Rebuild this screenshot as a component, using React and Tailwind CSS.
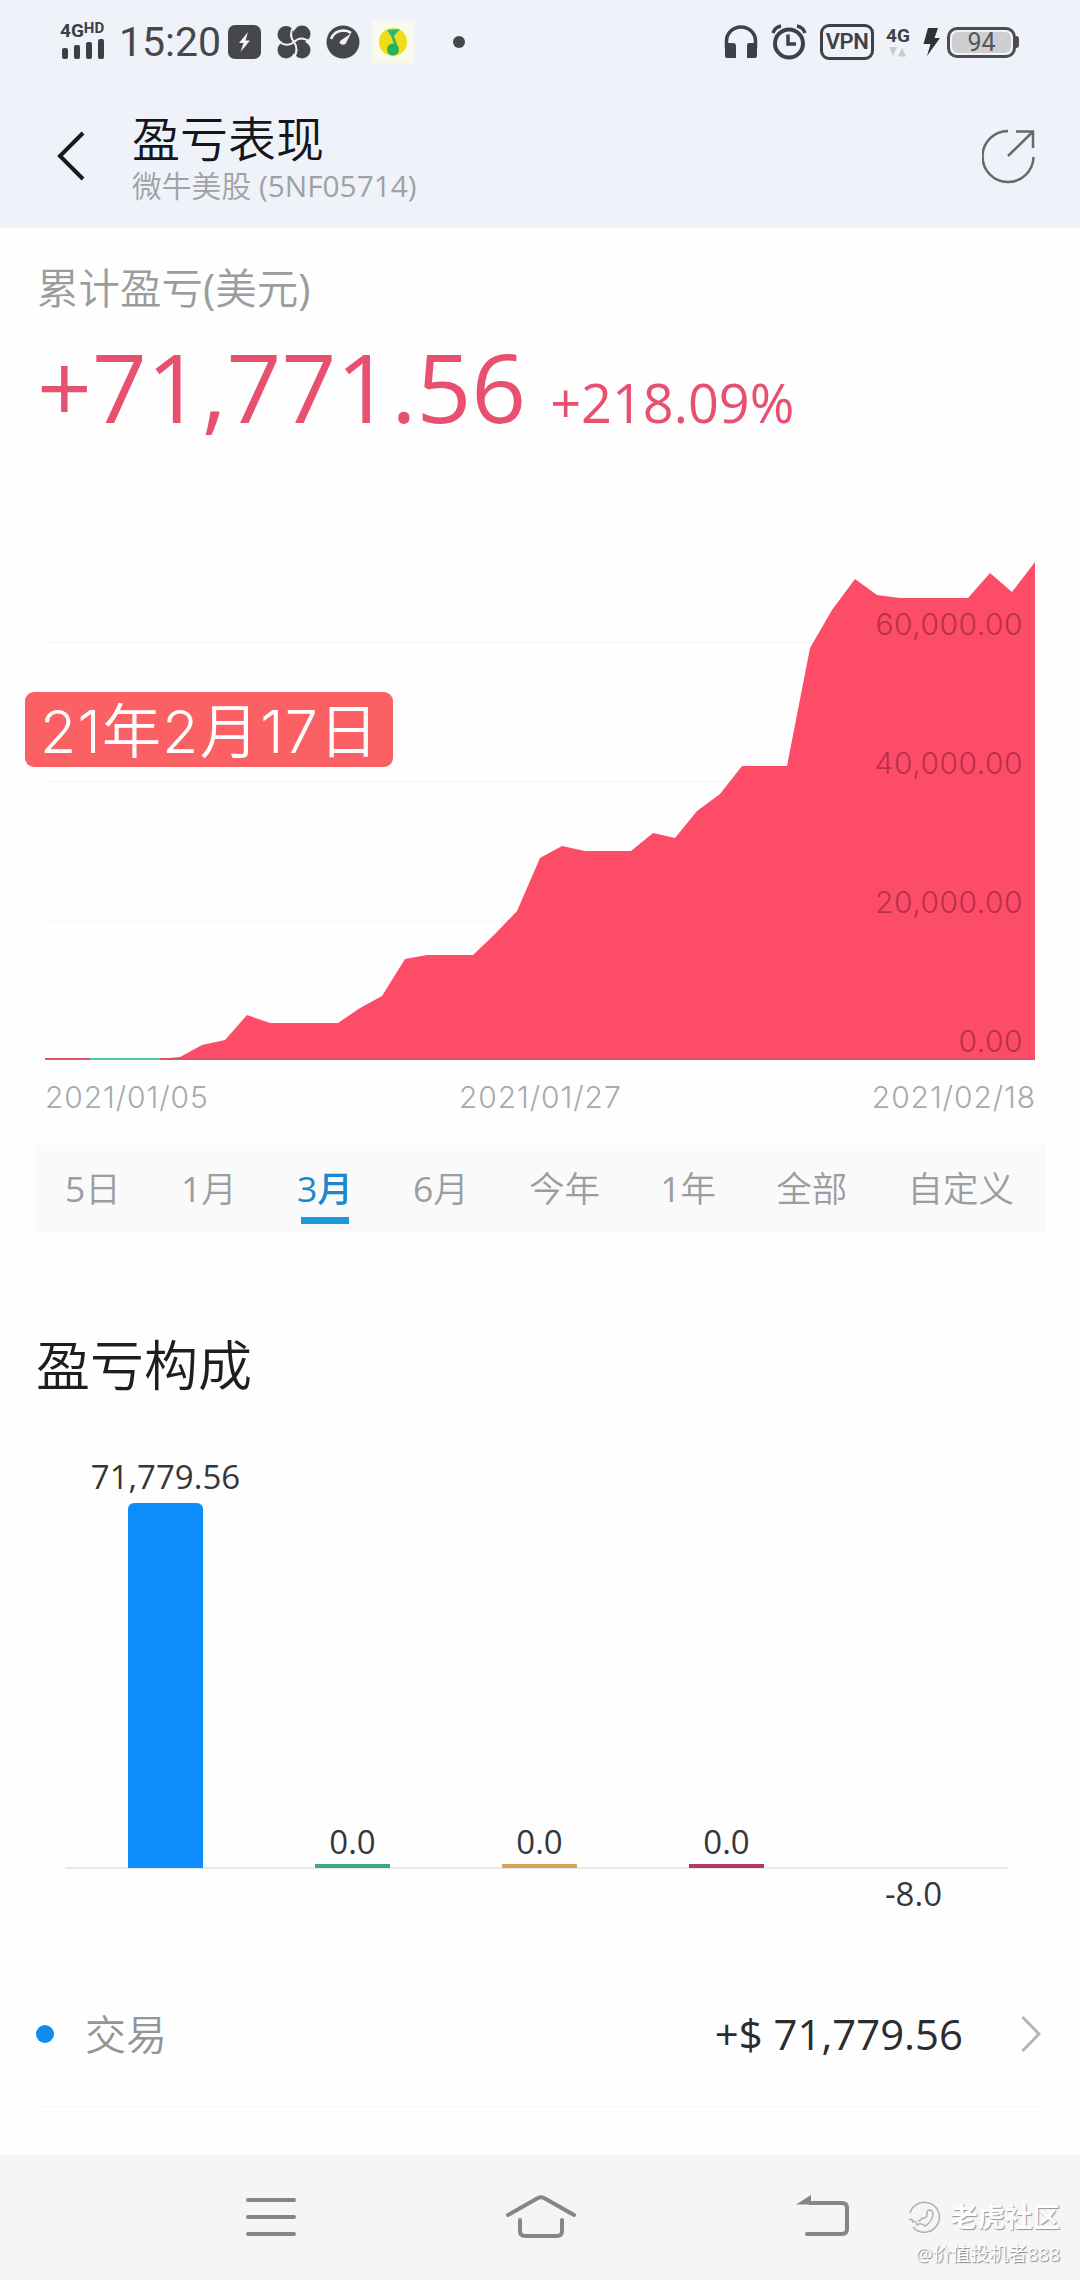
import React, { useState } from 'react'
import clsx from 'clsx'

// cumulative P/L, one point per day: [x, y] on a 1080 x 521 canvas
const POINTS = [
  [158, 519], [180, 517], [202, 505], [225, 500], [247, 475], [270, 483], [338, 483],
  [360, 468], [382, 456], [405, 419], [427, 415], [473, 415], [495, 394], [517, 371],
  [540, 318], [562, 306], [585, 311], [631, 311], [653, 293], [675, 298], [697, 271],
  [720, 254], [742, 226], [787, 226], [810, 108], [832, 70], [855, 39], [877, 55],
  [900, 58], [968, 58], [990, 33], [1012, 52], [1035, 22],
]

const RANGES = ['5日', '1月', '3月', '6月', '今年', '1年', '全部', '自定义']

const BARS = [
  { value: 71779.56, label: '71,779.56', height: 365, color: 'bg-[#0c8dfb] rounded-t-md', gap: 'mb-[6px]' },
  { value: 0, label: '0.0', height: 4, color: 'bg-[#3daa7d]', gap: 'mb-[2px]' },
  { value: 0, label: '0.0', height: 4, color: 'bg-[#d3a55c]', gap: 'mb-[2px]' },
  { value: 0, label: '0.0', height: 4, color: 'bg-[#b23b62]', gap: 'mb-[2px]' },
  { value: -8, label: '-8.0', height: 0, color: '', gap: '' },
]

const SignalIcon = () => (
  <div className="flex w-[46px] flex-col">
    <div className="flex items-start text-[#3d3f45] font-['Roboto',sans-serif] font-bold">
      <span className="text-[19px] leading-[16px]">4G</span>
      <span className="text-[15px] leading-[11px]">HD</span>
    </div>
    <svg width="46" height="22" viewBox="0 0 46 22" fill="#3d3f45">
      <rect x="2" y="9" width="6" height="11" rx="2" />
      <rect x="14" y="6" width="6" height="14" rx="2" />
      <rect x="26" y="3" width="6" height="17" rx="2" />
      <rect x="38" y="0" width="6" height="20" rx="2" />
    </svg>
  </div>
)

const BoltAppIcon = () => (
  <svg width="34" height="34" viewBox="0 0 34 34">
    <rect width="33" height="34" rx="7" fill="#45474b" />
    <path d="M20 7 L11 18 L15.500 18 L12.500 27 L22 15.500 L17.500 15.500 Z" fill="#f3f4fa" />
  </svg>
)

const FanIcon = () => (
  <svg width="34" height="34" viewBox="0 0 34 34">
    <g fill="#45474b">
      <circle cx="9" cy="9.500" r="8.500" />
      <circle cx="25" cy="9" r="8.500" />
      <circle cx="25" cy="25" r="8.500" />
      <circle cx="9" cy="25" r="8.500" />
      <rect x="9" y="9" width="16" height="16" />
    </g>
    <path d="M17 17 Q11 10 17 1 M17 17 Q24 10 33 17 M17 17 Q22 24 17 33 M17 17 Q10 23 1 16" fill="none" stroke="#f0f2fa" strokeWidth="2" />
  </svg>
)

const GaugeIcon = () => (
  <svg width="34" height="34" viewBox="0 0 34 34">
    <circle cx="17" cy="17" r="16.500" fill="#45474b" />
    <path d="M5 14 Q8 6 17 5.500 Q22 5.500 25 8" fill="none" stroke="#f0f2fa" strokeWidth="2.500" />
    <path d="M25 8.500 L19.500 19 Q16 21 13.500 18 Q13.500 15.500 16 14.500 Z" fill="#f0f2fa" />
  </svg>
)

const MusicIcon = () => (
  <div className="flex size-[42px] items-center justify-center bg-[#f8faec]">
    <svg width="30" height="30" viewBox="0 0 30 30">
      <circle cx="15" cy="15" r="14" fill="#f3dc16" />
      <path d="M9 3 L22 2 L16 9 L20 20 L17 20 L13 9 Z" fill="#2bb87c" />
      <circle cx="15" cy="22.500" r="6" fill="#1fb45a" />
    </svg>
  </div>
)

const HeadphonesIcon = () => (
  <svg width="34" height="34" viewBox="0 0 34 34" fill="#3f4148">
    <path d="M2.500 23 V16 A14.500 14 0 0 1 31.500 16 V23" fill="none" stroke="#3f4148" strokeWidth="3.500" />
    <path d="M1 18 H9 Q12 18 12 21 V33 H3 Q1 33 1 31 Z" />
    <path d="M33 18 H25 Q23 18 23 21 V33 H31 Q33 33 33 31 Z" />
  </svg>
)

const AlarmIcon = () => (
  <svg width="36" height="36" viewBox="0 0 36 36" fill="none" stroke="#3f4148">
    <circle cx="18" cy="19.500" r="14" strokeWidth="4" />
    <path d="M17 10.500 V20 H25" strokeWidth="3.500" />
    <path d="M2 9 Q4 3 10 2" strokeWidth="3.500" />
    <path d="M34 9 Q32 3 26 2" strokeWidth="3.500" />
  </svg>
)

const StatusBar = () => (
  <div className="flex h-[84px] items-center pl-[60px] pr-[61px]">
    <SignalIcon />
    <span className="ml-[13px] w-[104px] text-[41px] leading-[50px] text-[#45474b] font-['Roboto',sans-serif]">15:20</span>
    <div className="ml-[5px] flex items-center gap-[15px]">
      <BoltAppIcon />
      <FanIcon />
      <GaugeIcon />
    </div>
    <div className="ml-3">
      <MusicIcon />
    </div>
    <span className="ml-[39px] size-3 rounded-full bg-[#45474b]" />

    <div className="ml-auto flex items-center">
      <HeadphonesIcon />
      <div className="ml-[13px]">
        <AlarmIcon />
      </div>
      <span className="ml-[13px] flex h-[36px] w-[54px] items-center justify-center rounded-[9px] border-[3px] border-[#3f4148] text-[22px] leading-none tracking-tight text-[#3f4148] font-['Roboto',sans-serif] font-semibold">
        VPN
      </span>
      <div className="ml-3 flex w-6 flex-col items-center">
        <span className="text-[19px] leading-[17px] text-[#3f4148] font-['Roboto',sans-serif] font-bold">4G</span>
        <svg className="mt-[3px]" width="18" height="10" viewBox="0 0 18 10" fill="#c9cacd">
          <path d="M0 0 H8 L4 9 Z" />
          <path d="M9 9.500 H17 L13 1 Z" />
        </svg>
      </div>
      <svg className="ml-[13px]" width="18" height="30" viewBox="0 0 18 30" fill="#2f3137">
        <path d="M5 1 H15 L11.500 11 H17 L4 29 L7.500 17 H0.500 Z" />
      </svg>
      <div className="ml-[6px] flex h-[31px] w-[69px] rounded-[10px] border-[3px] border-[#4b4d53] p-[2px]">
        <span className="flex flex-1 items-center justify-center rounded-md bg-[#cfcfd1] text-[25px] leading-none text-[#55575b] font-['Roboto',sans-serif]">94</span>
      </div>
      <span className="h-3 w-[3px] rounded-r bg-[#4b4d53]" />
    </div>
  </div>
)

const Header = () => (
  <div className="flex h-[144px] items-start pl-[56px] pr-[44px]">
    <svg className="mt-[47px]" width="30" height="50" viewBox="0 0 30 50" fill="none" stroke="#17191f" strokeWidth="4">
      <path d="M27 2 L4 25 L27 48" />
    </svg>
    <div className="ml-[46px] mt-[25px] flex flex-col">
      <h1 className="text-[48px] leading-[60px] text-[#14161c]">盈亏表现</h1>
      <span className="-mt-px text-[29.800px] leading-[36px] text-[#a0a1a5]">微牛美股 (5NF05714)</span>
    </div>
    <svg className="ml-auto mt-[44px]" width="54" height="56" viewBox="0 0 54 56" fill="none" stroke="#66686d" strokeWidth="2.500">
      <path d="M26 3 A25.500 25.500 0 1 0 51.500 29" />
      <path d="M26 28 L51 3.500" />
      <path d="M34 3.500 H51 V20" />
    </svg>
  </div>
)

const ProfitChart = () => {
  const line = POINTS.map(p => p.join(',')).join(' ')
  return (
    <div className="relative mt-[104px] h-[521px]">
      <svg width="1080" height="521" viewBox="0 0 1080 521">
        {[101, 240, 380].map(y => (
          <rect key={y} x="45" y={y} width="990" height="3" fill="#fafafb" />
        ))}
        <polygon points={`158,520 ${line} 1035,520`} fill="#fd4c67" />
        <rect x="45" y="518" width="990" height="2" fill="#e3506c" />
        <rect x="90" y="518" width="70" height="2" fill="#4fc5a0" />
      </svg>
      <div className="absolute right-[57px] top-[64px] flex flex-col gap-[99px] text-right text-[30px] leading-[40px] tracking-[0.5px] text-[#b9304b] font-['Inter',sans-serif] font-light">
        <span>60,000.00</span>
        <span>40,000.00</span>
        <span>20,000.00</span>
        <span>0.00</span>
      </div>
      <div className="absolute left-[25px] top-[152px] flex h-[75px] w-[368px] items-center rounded-[9px] bg-[#fb6064] pl-[15px] pt-[4px] text-[59px] leading-none tracking-[1.300px] text-white font-['Inter','Noto_Sans_CJK_SC_DemiLight','Noto_Sans_CJK_SC',sans-serif] font-[350]">
        21年2月17日
      </div>
    </div>
  )
}

const RangeTabs = ({ active, onChange }) => (
  <div className="ml-[36px] mr-[34px] mt-[28px] flex h-[88px] justify-between bg-[#fafafa] pl-[29px] pr-[32px]">
    {RANGES.map(range => (
      <button
        key={range}
        onClick={() => onChange(range)}
        className={clsx(
          'flex flex-col items-center pt-[18px] text-[35.500px] leading-[50px]',
          range === active
            ? "text-[#1c87cf] font-['Open_Sans','Noto_Sans_CJK_SC',sans-serif] font-medium"
            : 'text-[#9c9d9f]'
        )}
      >
        {range}
        {range === active && <span className="mt-1 h-[7px] w-[48px] bg-[#1d98dd]" />}
      </button>
    ))}
  </div>
)

const Composition = () => (
  <div className="mt-[61px] text-[33px] text-[#35363a]">
    <div className="ml-[65px] mr-[72px] flex h-[413px] items-end border-b-2 border-[#e9e9ea] pl-[7px]">
      {BARS.map((bar, i) => (
        <div key={i} className="-mb-px flex w-[187px] shrink-0 flex-col items-center">
          {bar.value >= 0 && (
            <>
              <span className={clsx('leading-[40px]', bar.gap)}>{bar.label}</span>
              <span className={clsx('w-[75px]', bar.color)} style={{ height: bar.height }} />
            </>
          )}
        </div>
      ))}
    </div>
    <div className="flex h-[48px] pl-[72px]">
      {BARS.map((bar, i) => (
        <span key={i} className="w-[187px] text-center leading-[50px]">
          {bar.value < 0 && bar.label}
        </span>
      ))}
    </div>
  </div>
)

const TradeRow = () => (
  <div className="ml-[36px] mr-[39px] mt-[45px] flex h-[146px] items-center border-b-2 border-[#fafafa]">
    <span className="size-[18px] rounded-full bg-[#128bea]" />
    <span className="ml-[31px] text-[41px] leading-none text-[#949597]">交易</span>
    <span className="ml-auto text-[41.900px] leading-none text-[#2b2c30]">+$ 71,779.56</span>
    <svg className="ml-[58px]" width="20" height="38" viewBox="0 0 20 38" fill="none" stroke="#b4b5b7" strokeWidth="3">
      <path d="M1.500 2 L18 19 L1.500 36" />
    </svg>
  </div>
)

const NavBar = () => (
  <div className="relative mt-[47px] h-[125px] bg-[#f5f5f5]">
    <div className="flex items-start pl-[244px] pt-[39px]">
      <svg width="54" height="46" viewBox="0 0 54 46" stroke="#868686" strokeWidth="4" strokeLinecap="round">
        <path d="M4 6 H50 M4 23 H50 M4 40 H50" />
      </svg>
      <svg className="ml-[206px]" width="74" height="46" viewBox="0 0 74 46" fill="none" stroke="#868686" strokeWidth="4" strokeLinecap="round">
        <path d="M4 21 L33 4.500 Q37 2 41 4.500 L70 21" />
        <path d="M16 26 V37 Q16 42 21 42 H53 Q58 42 58 37 V26" />
      </svg>
      <svg className="ml-[218px]" width="56" height="46" viewBox="0 0 56 46" fill="none" stroke="#868686" strokeWidth="4" strokeLinecap="round">
        <path d="M14 9 H46 Q51 9 51 14 V35 Q51 40 46 40 H11" />
        <path d="M0 10.500 L15 1 V10.500 Z" fill="#868686" stroke="none" />
      </svg>
    </div>

    {/* community watermark */}
    <div className="absolute right-[20px] top-[45px] flex flex-col items-end text-[#fdfdfd] font-['Open_Sans','Noto_Sans_CJK_SC',sans-serif]">
      <div className="flex items-center gap-[9px]">
        <svg width="34" height="34" viewBox="0 0 34 34" fill="none" stroke="#b0b1b3" strokeWidth="1.500">
          <path d="M3 13 A15 15 0 1 1 6 27" />
          <path d="M2 20 Q5 18 6 22 Q9 20 10 25 Q14 22 18 26 Q25 22 26 14 Q26 10 22 10 Q19 11 20 16 Q18 19 15 18 Q13 22 11 20" />
        </svg>
        <span className="text-[27.500px] leading-[34px] font-bold [text-shadow:1px_1px_1px_#929396]">老虎社区</span>
      </div>
      <span className="mt-[6px] text-[19px] leading-[28px] [text-shadow:1px_1px_1px_#85868a]">@价值投机者888</span>
    </div>
  </div>
)

export default function App() {
  const [range, setRange] = useState('3月')

  return (
    <div className="h-[2280px] w-[1080px] overflow-hidden bg-[#fefefe] font-['Open_Sans','Noto_Sans_CJK_SC_DemiLight','Noto_Sans_CJK_SC',sans-serif]">
      <div className="h-[228px] bg-[#f0f2fa]">
        <StatusBar />
        <Header />
      </div>

      <div className="px-[37px] pt-[30px]">
        <div className="text-[41.500px] leading-[60px] text-[#9b9c9e]">累计盈亏(美元)</div>
        <div className="mt-[17px] flex items-baseline text-[#e8506f]">
          <span className="text-[96px] leading-[101px]">+71,771.56</span>
          <span className="ml-[24px] text-[54px] leading-[60px]">+218.09%</span>
        </div>
      </div>

      <ProfitChart />
      <div className="mt-[16px] flex justify-between pl-[45px] pr-[44px] text-[30px] leading-[40px] tracking-[0.900px] text-[#a9aaac] font-['Inter',sans-serif] font-light">
        <span>2021/01/05</span>
        <span>2021/01/27</span>
        <span>2021/02/18</span>
      </div>

      <RangeTabs active={range} onChange={setRange} />

      <h2 className="ml-[36px] mt-[102px] text-[54px] leading-[60px] text-[#1d1e21]">盈亏构成</h2>
      <Composition />
      <TradeRow />
      <NavBar />
    </div>
  )
}
